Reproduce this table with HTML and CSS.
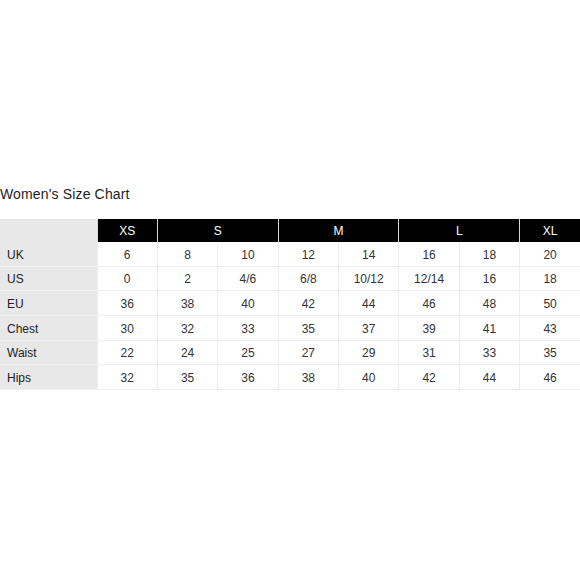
FILE: index.html
```html
<!DOCTYPE html>
<html>
<head>
<meta charset="utf-8">
<link rel="stylesheet" href="styles.css">
</head>
<body>
<div class="page">
  <div class="title">Women's Size Chart</div>
  <table class="chart">
    <colgroup>
      <col class="c-label">
      <col span="8" class="c-val">
    </colgroup>
    <thead>
      <tr class="head">
        <th class="blank"></th>
        <th>XS</th>
        <th colspan="2">S</th>
        <th colspan="2">M</th>
        <th colspan="2">L</th>
        <th>XL</th>
      </tr>
    </thead>
    <tbody>
      <tr><th>UK</th><td>6</td><td>8</td><td>10</td><td>12</td><td>14</td><td>16</td><td>18</td><td>20</td></tr>
      <tr><th>US</th><td>0</td><td>2</td><td>4/6</td><td>6/8</td><td>10/12</td><td>12/14</td><td>16</td><td>18</td></tr>
      <tr><th>EU</th><td>36</td><td>38</td><td>40</td><td>42</td><td>44</td><td>46</td><td>48</td><td>50</td></tr>
      <tr><th>Chest</th><td>30</td><td>32</td><td>33</td><td>35</td><td>37</td><td>39</td><td>41</td><td>43</td></tr>
      <tr><th>Waist</th><td>22</td><td>24</td><td>25</td><td>27</td><td>29</td><td>31</td><td>33</td><td>35</td></tr>
      <tr><th>Hips</th><td>32</td><td>35</td><td>36</td><td>38</td><td>40</td><td>42</td><td>44</td><td>46</td></tr>
    </tbody>
  </table>
</div>
</body>
</html>
```
FILE: styles.css
```css
html, body {
  margin: 0;
  padding: 0;
  background: #fff;
}
.page {
  padding-top: 186px;
  font-family: "Liberation Sans", Arial, sans-serif;
  color: #222;
}
.title {
  font-size: 14px;
  line-height: 16px;
  height: 16px;
  margin-bottom: 17px;
  letter-spacing: 0.15px;
  color: #1e1e1e;
}
.chart {
  border-collapse: collapse;
  table-layout: fixed;
  width: 580px;
  font-size: 12px;
  color: #333;
}
.c-label { width: 97px; }
.chart th, .chart td {
  padding: 0;
  text-align: center;
  font-weight: normal;
}
.chart .head th {
  background: #000;
  color: #fff;
  height: 22px;
  padding-top: 1px;
  border-left: 1px solid #d8d8d8;
}
.chart .head th.blank {
  background: #e8e8e8;
  border-left: 0;
}
.chart tbody th {
  background: #e8e8e8;
  text-align: left;
  padding-left: 7px;
  padding-top: 2px;
  color: #222;
  height: 21.67px;
  border-bottom: 1px solid #f2f2f2;
}
.chart tbody td {
  height: 21.67px;
  padding-top: 2px;
  border: 1px solid #ececec;
}
.chart tbody tr:first-child td { border-top: 0; }
.chart tbody td:last-child { border-right: 0; }
```
